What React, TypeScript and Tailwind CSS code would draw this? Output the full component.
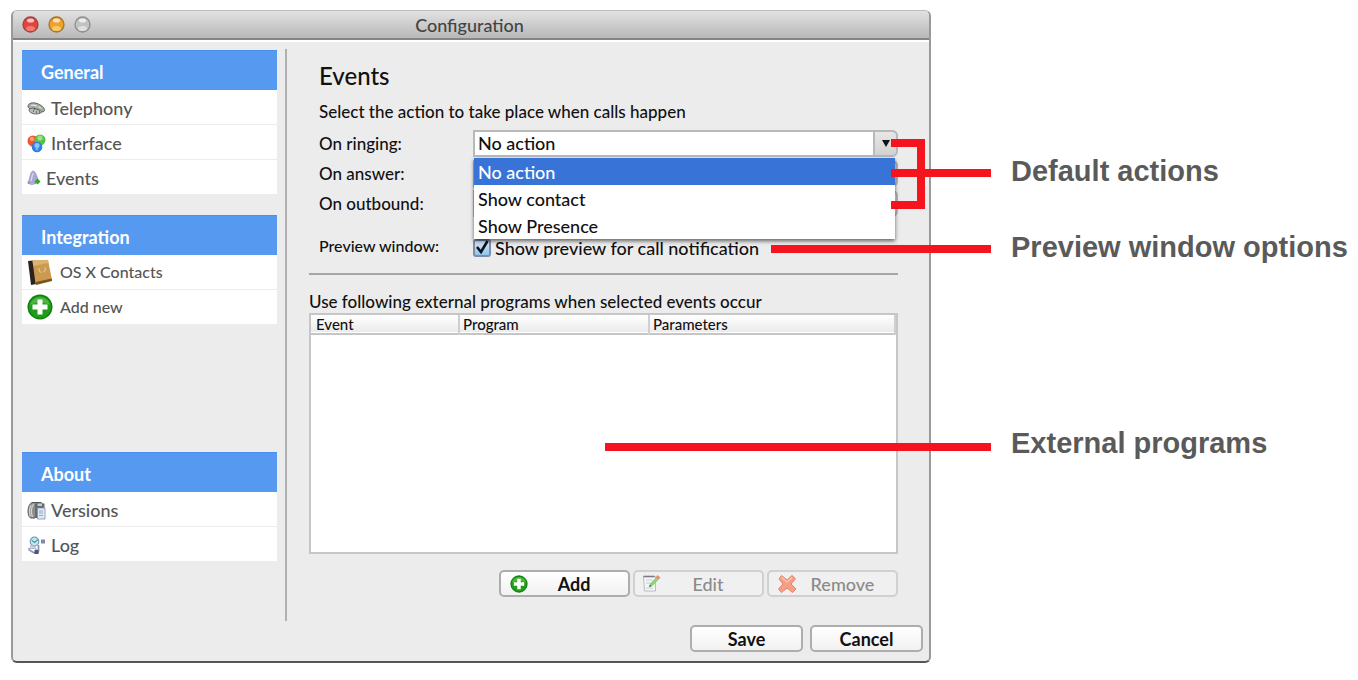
import React, { useState } from 'react';

const ACTIONS = ['No action', 'Show contact', 'Show Presence'];

// --- ICONS ---

const PhoneIcon = () => (
  <svg width="19" height="16" viewBox="0 0 19 16">
    <ellipse cx="9" cy="10" rx="7" ry="4" fill="#b9bdb9" stroke="#6b6f6c" />
    <path d="M1 6.500C1 3 6 2 10 3.500s8 4 7.500 7c-.5 2-3 1.500-4 0L6 8C4 9 1.500 9 1 6.500z" fill="#a9aca9" stroke="#5d605e" />
    <path d="M4 5.500c3-1 8 .500 10 3" stroke="#e4e8e4" strokeWidth="1.200" fill="none" />
    <path d="M6 11h1M9 12h1M12 12h1M7 9h1" stroke="#333" strokeWidth="1.200" />
    <circle cx="11" cy="5.500" r="1.200" fill="#7fc25c" />
  </svg>
);

const CirclesIcon = () => (
  <svg width="19" height="19" viewBox="0 0 19 19">
    <circle cx="6" cy="7" r="5.500" fill="#f0562c" />
    <circle cx="5" cy="5" r="2.200" fill="#fa9a78" />
    <circle cx="13" cy="6" r="5.500" fill="#58c148" />
    <circle cx="13" cy="4" r="2.600" fill="#9be28a" />
    <circle cx="10" cy="13" r="5.300" fill="#2d7fe0" />
    <circle cx="10" cy="11.500" r="2.600" fill="#8cc4fa" />
    <circle cx="10" cy="15" r="1.600" fill="#64b4f8" />
  </svg>
);

const BellIcon = () => (
  <svg width="14" height="16" viewBox="0 0 14 16">
    <path d="M.5 13C3 10 3 1 6 1s4.500 7.500 6 11.500z" fill="#a7a8d4" stroke="#8d8ebb" strokeWidth=".6" />
    <path d="M4 11c1-3 1-7 2.500-8" stroke="#d5d6f0" strokeWidth="1.500" fill="none" />
    <path d="M1 13c2 1.500 6 1.500 8 0" stroke="#77779f" fill="none" />
    <path d="M10.500 8.500l3 3-3 3-3-3z" fill="#35a52c" />
  </svg>
);

const BookIcon = () => (
  <svg width="26" height="27" viewBox="0 0 26 27">
    <path d="M1 2l5-.5L9.500 25 4 26z" fill="#2c211c" />
    <path d="M5.500 1.500L21 1l4 20-16.500 4z" fill="#c99a50" />
    <path d="M5.500 1.500L21 1l.6 3L6.200 7z" fill="#dcb36c" />
    <path d="M8.500 23l16.300-3.500.2 2.500L9 26z" fill="#7b541f" />
    <path d="M12 9.500c0 3 1 4 2.500 3.500M18 8.500c.5 3 0 4-1.500 4.500" stroke="#efd8a4" fill="none" />
  </svg>
);

const AddIcon = ({ className }: { className: string }) => (
  <svg className={className} viewBox="0 0 26 26">
    <circle cx="13" cy="13" r="12.500" fill="#0f7f0e" />
    <circle cx="13" cy="13" r="11" fill="#1f9c1b" />
    <path d="M3 11a10.300 10.300 0 0 1 20 0c-6-3-14-3-20 0z" fill="#63c353" opacity=".7" />
    <path d="M10.500 5.500h5v5h5v5h-5v5h-5v-5h-5v-5h5z" fill="#fff" />
  </svg>
);

const VersionsIcon = () => (
  <svg width="19" height="19" viewBox="0 0 19 19">
    <path d="M5 1.500h9L8 17H3.500C-.5 14 .5 3.500 5 1.500z" fill="#8e9090" stroke="#55585a" />
    <path d="M6.500 3C4 7 4 12 5.500 16M4 4C2 8 2 12 3.500 15.500" stroke="#d4d6d6" strokeWidth="1.200" fill="none" />
    <path d="M8 2.500h9.500V17H8z" fill="#696b6e" />
    <rect x="10" y="2" width="5.500" height="3.500" rx="1" fill="#c9ccd0" stroke="#55585a" strokeWidth=".8" />
    <path d="M10.500 7h7.500v11h-7.500z" fill="#dfe9f7" stroke="#7f90ad" strokeWidth=".8" />
    <path d="M12 10h4M12 12h4M12 14.500h4" stroke="#8fa9d2" />
  </svg>
);

const LogIcon = () => (
  <svg width="19" height="19" viewBox="0 0 19 19">
    <circle cx="7.500" cy="5.500" r="4.300" fill="#c7e6ee" stroke="#7d9fb3" strokeWidth="1.200" />
    <path d="M5 4.500l2.500 2 3.500-3" stroke="#3c9c9d" strokeWidth="1.200" fill="none" />
    <path d="M11.500 9v6c0 2-3 2.500-5 1.500l-5-3" stroke="#9295b8" strokeWidth="1.800" fill="none" />
    <path d="M1 12.500l7-.5 2 2.500M3 10h6" stroke="#adb6cf" strokeWidth="1.500" fill="none" />
    <rect x="14" y="3.500" width="4" height="4" fill="#8287ab" />
    <rect x="7.500" y="14" width="4" height="4" fill="#4e5280" />
  </svg>
);

const EditIcon = () => (
  <svg width="20" height="19" viewBox="0 0 20 19">
    <path d="M1.500 2.500h12v14.500h-11z" fill="#f4f5f7" stroke="#b9bcc4" />
    <path d="M1.500 2.500h11" stroke="#777b84" strokeWidth="1.600" />
    <path d="M4 6h6M4 9h4M4 14h7" stroke="#c9ccd6" />
    <path d="M7 13l1-3.500 6-6 2.500 2.200-6 6.300z" fill="#8bd672" />
    <path d="M13.500 3.500l2-2.500 3 2.500-2 2.200z" fill="#ec8a78" />
    <path d="M7 13l1-2.500 1.500 1.700z" fill="#3e7a36" />
  </svg>
);

const RemoveIcon = () => (
  <svg width="20" height="20" viewBox="0 0 20 20">
    <path
      d="M4.500 1.500L10 6l5-4.500 3.500 3.300L14 10l5 5-3.500 3.500L10 14l-5.500 4.500L1.500 15 6 10 2 5z"
      fill="#f5a084"
      stroke="#e5826a"
      strokeLinejoin="round"
    />
    <path d="M4.500 3.500L10 8l5-4.500" stroke="#fbc9b4" strokeWidth="1.300" fill="none" />
  </svg>
);

const TrafficLight = ({ rim, fill, shine }: { rim: string; fill: string; shine: string }) => (
  <svg width="17" height="17" viewBox="0 0 17 17">
    <circle cx="8.500" cy="8.500" r="7.500" fill={fill} stroke={rim} strokeWidth="1.300" />
    <ellipse cx="8.500" cy="4.500" rx="3.500" ry="2" fill="#fff" opacity=".7" />
    <ellipse cx="8.500" cy="12.500" rx="4.500" ry="2.600" fill={shine} opacity=".6" />
  </svg>
);

// --- SIDEBAR ---

interface SidebarItem {
  label: string;
  icon: React.ReactNode;
}

const SidebarSection = ({ title, items, compact }: { title: string; items: SidebarItem[]; compact?: boolean }) => (
  <section>
    <h2 className="flex h-10 items-center border-t border-[#4a8ff0] bg-[#5699f0] pt-[3px] pl-[19px] text-[18px] leading-5 font-bold text-white">
      {title}
    </h2>
    <ul className="divide-y divide-[#ececec] bg-white">
      {items.map((item) => (
        <li key={item.label}>
          <a
            href={`#${item.label}`}
            className={`flex h-[34px] items-center pl-[5px] font-medium text-[#555] ${
              compact ? 'gap-[7px] text-[16px]' : 'gap-[5px] pt-[2px] text-[18px]'
            }`}
          >
            {item.icon}
            {item.label}
          </a>
        </li>
      ))}
    </ul>
  </section>
);

// --- FORM PARTS ---

const ActionSelect = ({ id, value, onChange }: { id: string; value: string; onChange: (v: string) => void }) => (
  <div className="relative">
    <select
      id={id}
      value={value}
      onChange={(e) => onChange(e.target.value)}
      className="block h-[27px] w-full appearance-none rounded-r-md border-2 border-[#b9b9b9] bg-white pl-[3px] text-[18px] leading-[23px] font-medium text-[#111]"
    >
      {ACTIONS.map((a) => (
        <option key={a}>{a}</option>
      ))}
    </select>
    <span className="pointer-events-none absolute inset-y-0 right-0 flex w-[25px] items-center justify-center rounded-r-md border-2 border-[#b9b9b9] bg-linear-to-b from-[#e8e8e8] to-[#d2d2d2]">
      <svg width="8" height="7" viewBox="0 0 8 7">
        <path d="M0 0h8L4 7z" fill="#111" />
      </svg>
    </span>
  </div>
);

const PushButton = ({ children, className, disabled }: { children: React.ReactNode; className: string; disabled?: boolean }) => (
  <button
    type="button"
    disabled={disabled}
    className={`flex h-[27px] items-center rounded-[5px] border-2 text-[18px] leading-[22px] ${
      disabled
        ? 'border-[#d0d0d0] bg-[#f0f0f0] font-medium text-[#8a8a8a]'
        : 'border-[#adadad] bg-linear-to-b from-white to-[#f1f1f1] font-bold text-[#111]'
    } ${className}`}
  >
    {children}
  </button>
);

const ConfigurationWindow = () => {
  const [ringing, setRinging] = useState(ACTIONS[0]);
  const [answer, setAnswer] = useState(ACTIONS[0]);
  const [outbound, setOutbound] = useState(ACTIONS[0]);
  const [preview, setPreview] = useState(true);

  return (
    <div className="min-w-0 flex-1 overflow-hidden rounded-md border-x-2 border-t border-b-2 border-x-[#999] border-t-[#bbb] border-b-[#555] bg-[#ececec]">
      {/* Title bar */}
      <header className="grid h-[29px] grid-cols-[1fr_auto_1fr] items-center border-b-2 border-[#858585] bg-linear-to-b from-[#e2e2e2] to-[#b8b8b8] pl-[9px]">
        <div className="flex gap-[9px]">
          <TrafficLight rim="#a34340" fill="#e0443f" shine="#ff9c90" />
          <TrafficLight rim="#a77428" fill="#efa02f" shine="#ffe48a" />
          <TrafficLight rim="#8e8e8e" fill="#c2c2c2" shine="#f2f2f2" />
        </div>
        <h1 className="pr-3 text-[18px] leading-6 font-medium text-[#444]">Configuration</h1>
      </header>

      <div className="flex border-t-2 border-white pt-[7px]">
        <nav className="ml-[9px] flex w-[255px] shrink-0 flex-col pt-px">
          <SidebarSection
            title="General"
            items={[
              { label: 'Telephony', icon: <PhoneIcon /> },
              { label: 'Interface', icon: <CirclesIcon /> },
              { label: 'Events', icon: <BellIcon /> },
            ]}
          />
          <div className="mt-[21px]">
            <SidebarSection
              compact
              title="Integration"
              items={[
                { label: 'OS X Contacts', icon: <BookIcon /> },
                { label: 'Add new', icon: <AddIcon className="size-[26px]" /> },
              ]}
            />
          </div>
          <div className="mt-32">
            <SidebarSection
              title="About"
              items={[
                { label: 'Versions', icon: <VersionsIcon /> },
                { label: 'Log', icon: <LogIcon /> },
              ]}
            />
          </div>
        </nav>

        <main className="ml-2 flex-1 border-l-2 border-[#b0b0b0] pt-3 pr-[31px] pb-6 pl-[22px] text-[17px] font-medium text-[#111]">
          <div className="pl-[10px]">
            <h2 className="h-[30px] text-[24px] leading-[30px]">Events</h2>
            <p className="mt-[10px] leading-[21px]">Select the action to take place when calls happen</p>
          </div>

          <div className="relative mt-2 grid grid-cols-[154px_1fr] items-center gap-y-[3px] pl-[10px]">
            <label htmlFor="ringing">On ringing:</label>
            <ActionSelect id="ringing" value={ringing} onChange={setRinging} />
            <label htmlFor="answer">On answer:</label>
            <ActionSelect id="answer" value={answer} onChange={setAnswer} />
            <label htmlFor="outbound">On outbound:</label>
            <ActionSelect id="outbound" value={outbound} onChange={setOutbound} />

            {/* Open list of the first combo */}
            <ul role="listbox" className="absolute top-7 right-[3px] left-[165px] z-10 bg-white text-[18px] shadow-[0_2px_4px_rgba(0,0,0,0.6)]">
              {ACTIONS.map((a) => (
                <li
                  key={a}
                  role="option"
                  aria-selected={a === ringing}
                  onClick={() => setRinging(a)}
                  className={`flex h-[27px] items-center pl-1 leading-6 ${a === ringing ? 'bg-[#3874d8] text-white' : ''}`}
                >
                  {a}
                </li>
              ))}
            </ul>
          </div>

          <div className="mt-[17px] grid h-[27px] grid-cols-[154px_1fr] items-center pl-[10px]">
            <span className="pb-1 text-[16px]">Preview window:</span>
            <label className="flex items-center gap-1 text-[18px]">
              <span className="relative flex">
                <input
                  type="checkbox"
                  checked={preview}
                  onChange={(e) => setPreview(e.target.checked)}
                  className="size-[18px] appearance-none rounded-[3px] border-2 border-[#7d8ea8] bg-linear-to-b from-[#d6e8fa] to-[#8fc4f2]"
                />
                {preview && (
                  <svg className="pointer-events-none absolute inset-0" width="18" height="18" viewBox="0 0 18 18">
                    <path d="M4 8l4 5 6.500-11" stroke="#111" strokeWidth="2.600" fill="none" />
                  </svg>
                )}
              </span>
              Show preview for call notification
            </label>
          </div>

          <hr className="mt-3 border-t-2 border-[#a6a6a6]" />

          <p className="mt-4 leading-[21px]">Use following external programs when selected events occur</p>
          <div className="mt-px min-h-[241px] border-2 border-[#c6c6c6] bg-white">
            <table className="w-full table-fixed text-left text-[15px] leading-[18px]">
              <thead>
                <tr className="border-b-2 border-[#c6c6c6] bg-linear-to-b from-white to-[#ebebeb]">
                  <th className="w-[148px] border-r-2 border-[#cfcfcf] pl-[5px] font-medium">Event</th>
                  <th className="w-[190px] border-r-2 border-[#cfcfcf] pl-[3px] font-medium">Program</th>
                  <th className="border-r-2 border-[#cfcfcf] pl-[3px] font-medium">Parameters</th>
                </tr>
              </thead>
              <tbody />
            </table>
          </div>

          <div className="mt-4 flex justify-end gap-[3px]">
            <PushButton className="w-[131px] pl-[9px]" >
              <AddIcon className="size-[18px]" />
              <span className="flex-1 pr-2">Add</span>
            </PushButton>
            <PushButton className="w-[131px] pl-[7px]" disabled>
              <EditIcon />
              <span className="flex-1 pr-2">Edit</span>
            </PushButton>
            <PushButton className="w-[131px] pl-[8px]" disabled>
              <RemoveIcon />
              <span className="flex-1 pr-2">Remove</span>
            </PushButton>
          </div>
        </main>
      </div>

      <footer className="flex justify-end gap-[7px] pt-1 pr-[6px] pb-[9px]">
        <PushButton className="w-[113px] justify-center">Save</PushButton>
        <PushButton className="w-[113px] justify-center">Cancel</PushButton>
      </footer>
    </div>
  );
};

// --- CALLOUTS ---

export default function App() {
  return (
    <div className="flex min-h-screen items-start bg-white pt-[10px] pb-4 pl-[11px] font-['Lato','Open_Sans',sans-serif]">
      <ConfigurationWindow />

      <aside className="z-20 w-[427px] shrink-0 pt-[145px] pl-20 font-['Liberation_Sans',Arial,sans-serif] text-[29px] leading-8 font-bold whitespace-nowrap text-[#5a5a5a]">
        <p className="relative">
          <span className="absolute top-[14px] right-full mr-5 h-2 w-[100px] bg-[#f5141e]" />
          <span className="absolute top-[-16px] right-full mr-[86px] h-[70px] w-[34px] border-y-8 border-r-8 border-[#f5141e]" />
          Default actions
        </p>
        <p className="relative mt-11">
          <span className="absolute top-[14px] right-full mr-5 h-2 w-[220px] bg-[#f5141e]" />
          Preview window options
        </p>
        <p className="relative mt-[164px]">
          <span className="absolute top-4 right-full mr-5 h-2 w-[386px] bg-[#f5141e]" />
          External programs
        </p>
      </aside>
    </div>
  );
}
